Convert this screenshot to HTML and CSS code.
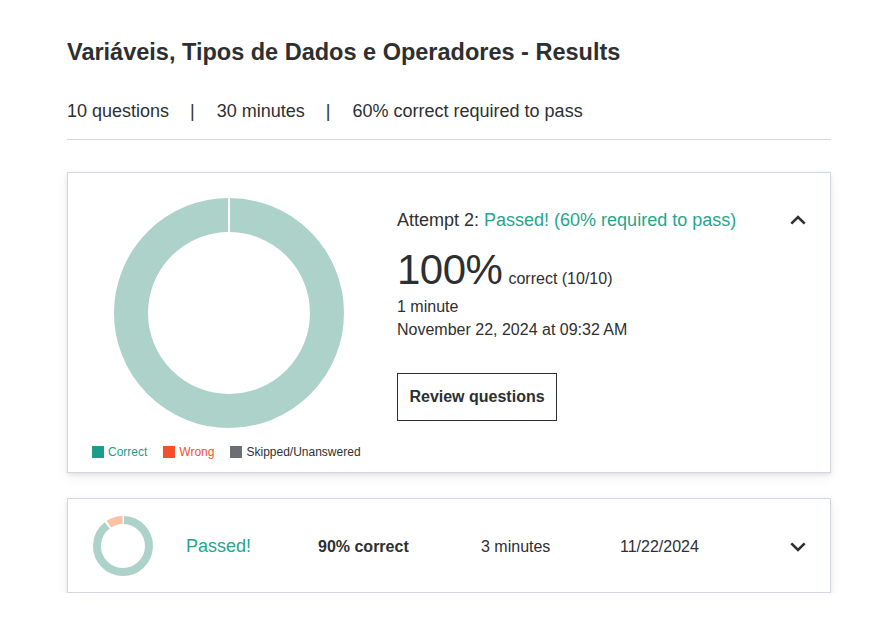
FILE: index.html
```html
<!DOCTYPE html>
<html lang="pt">
<head>
<meta charset="utf-8">
<title>Results</title>
<link rel="stylesheet" href="styles.css">
</head>
<body>
<main class="page">
  <h1 class="title">Variáveis, Tipos de Dados e Operadores - Results</h1>
  <div class="meta">
    <span>10 questions</span><span class="sep">|</span><span>30 minutes</span><span class="sep">|</span><span>60% correct required to pass</span>
  </div>

  <section class="card attempt">
    <div class="chart-col">
      <svg class="donut" width="232" height="232" viewBox="0 0 232 232">
        <circle cx="116" cy="116" r="98" fill="none" stroke="#acd2ca" stroke-width="34"/>
        <rect x="115" y="0" width="2" height="36" fill="#fff"/>
      </svg>
      <ul class="legend">
        <li class="lg-correct"><span class="sq"></span>Correct</li>
        <li class="lg-wrong"><span class="sq"></span>Wrong</li>
        <li class="lg-skip"><span class="sq"></span>Skipped/Unanswered</li>
      </ul>
    </div>
    <div class="info">
      <div class="head">
        <p class="attempt-line">Attempt 2: <span class="pass">Passed! (60% required to pass)</span></p>
        <svg class="chev" width="16" height="10" viewBox="0 0 16 10"><path d="M1.3 8.7 L8 2 L14.7 8.7" fill="none" stroke="#2d2f31" stroke-width="2.6"/></svg>
      </div>
      <p class="score"><span class="big">100%</span><span class="small">correct (10/10)</span></p>
      <p class="detail">1 minute</p>
      <p class="detail">November 22, 2024 at 09:32 AM</p>
      <button class="review">Review questions</button>
    </div>
  </section>

  <section class="card row">
    <svg class="mini" width="62" height="62" viewBox="0 0 62 62">
      <g transform="rotate(-88 31 31)">
        <circle cx="31" cy="31" r="26" fill="none" stroke="#acd2ca" stroke-width="8" stroke-dasharray="144.5 200"/>
      </g>
      <g transform="rotate(237 31 31)">
        <circle cx="31" cy="31" r="26" fill="none" stroke="#f8c2a4" stroke-width="8" stroke-dasharray="14.5 200"/>
      </g>
    </svg>
    <span class="r-pass">Passed!</span>
    <span class="r-score">90% correct</span>
    <span class="r-time">3 minutes</span>
    <span class="r-date">11/22/2024</span>
    <svg class="chev r-chev" width="16" height="10" viewBox="0 0 16 10"><path d="M1.3 1.3 L8 8 L14.7 1.3" fill="none" stroke="#2d2f31" stroke-width="2.6"/></svg>
  </section>
</main>
</body>
</html>
```

FILE: styles.css
```css
* { box-sizing: border-box; }
html, body { margin: 0; padding: 0; background: #fff; }
body {
  font-family: "Liberation Sans", Arial, sans-serif;
  color: #2d2f31;
}
p { margin: 0; }
.page {
  width: 764px;
  margin-left: 67px;
  padding-top: 36px;
}
.title {
  margin: 0;
  font-size: 23.5px;
  font-weight: 700;
  line-height: 32px;
}
.meta {
  margin-top: 31px;
  font-size: 18px;
  line-height: 24px;
  padding-bottom: 16px;
  border-bottom: 1px solid #d1d7dc;
  display: flex;
}
.sep { margin: 0 22px 0 21px; }
.card {
  border: 1px solid #d1d7dc;
  box-shadow: 0 2px 4px rgba(0,0,0,0.08), 0 4px 12px rgba(0,0,0,0.06);
  background: #fff;
}
.attempt {
  margin-top: 32px;
  height: 301px;
  display: flex;
  padding: 24px 24px 0 24px;
}
.chart-col {
  width: 305px;
  display: flex;
  flex-direction: column;
  align-items: flex-start;
}
.donut { display: block; margin-left: 21px; }
.legend {
  list-style: none;
  margin: 16px 0 0 0;
  padding: 0;
  display: flex;
  gap: 16px;
  font-size: 12px;
  line-height: 14px;
}
.legend li { display: flex; align-items: center; }
.sq { width: 12px; height: 12px; display: inline-block; margin-right: 4px; }
.lg-correct { color: #1e9c8a; }
.lg-correct .sq { background: #1e9c8a; }
.lg-wrong { color: #f4502d; }
.lg-wrong .sq { background: #f4502d; }
.lg-skip { color: #2d2f31; }
.lg-skip .sq { background: #6a6f73; }

.info { flex: 1; padding-top: 11px; }
.head { display: flex; justify-content: space-between; align-items: center; }
.attempt-line { font-size: 18px; line-height: 24px; }
.pass { color: #26a58d; }
.chev { display: block; flex: none; }
.score { margin-top: 13px; display: flex; align-items: baseline; }
.big { font-size: 42px; line-height: 50px; letter-spacing: -0.5px; }
.small { font-size: 16px; margin-left: 6px; }
.detail { font-size: 16px; line-height: 23px; }
.review {
  margin-top: 32px;
  width: 160px;
  height: 48px;
  border: 1px solid #2d2f31;
  background: #fff;
  font-family: "Liberation Sans", Arial, sans-serif;
  font-weight: 700;
  font-size: 16px;
  color: #2d2f31;
  padding: 0;
}
.row {
  margin-top: 25px;
  height: 95px;
  display: flex;
  align-items: center;
  padding: 2px 24px 0 24px;
}
.mini { display: block; flex: none; margin-top: -2px; }
.r-pass { margin-left: 32px; width: 132px; font-size: 18px; color: #26a58d; }
.r-score { width: 163px; font-size: 16px; font-weight: 700; }
.r-time { width: 139px; font-size: 16px; }
.r-date { font-size: 16px; }
.r-chev { margin-left: auto; }
```
